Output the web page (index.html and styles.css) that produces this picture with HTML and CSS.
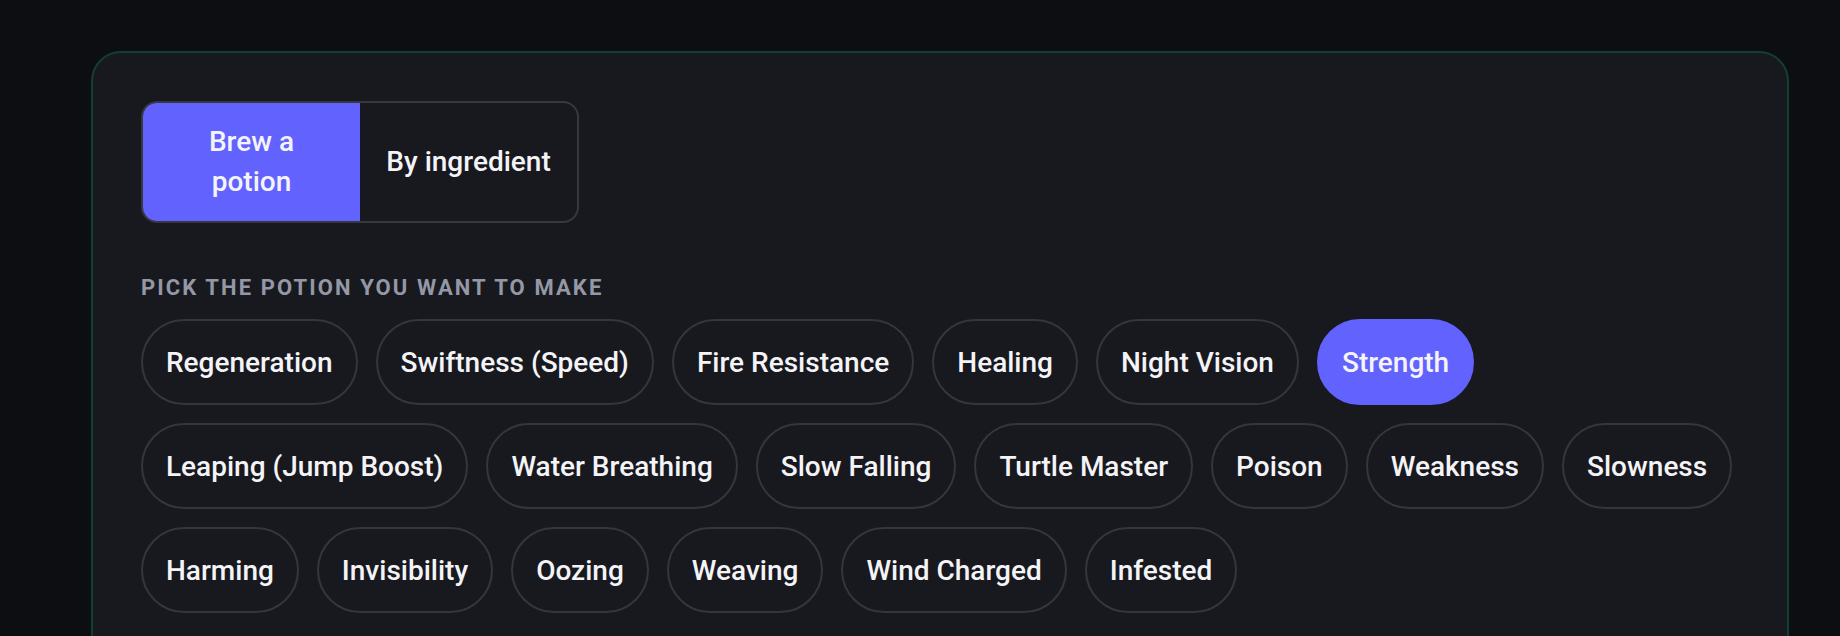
FILE: index.html
```html
<!DOCTYPE html>
<html lang="en">
<head>
<meta charset="utf-8">
<title>Potion brewing</title>
<link rel="stylesheet" href="styles.css">
</head>
<body>
<main class="page">
  <section class="card">
    <div class="toggle">
      <button class="seg seg-active">Brew a<br>potion</button>
      <button class="seg">By ingredient</button>
    </div>
    <h2 class="label">Pick the potion you want to make</h2>
    <div class="pills">
      <button class="pill">Regeneration</button>
      <button class="pill">Swiftness (Speed)</button>
      <button class="pill">Fire Resistance</button>
      <button class="pill">Healing</button>
      <button class="pill">Night Vision</button>
      <button class="pill pill-active">Strength</button>
      <button class="pill">Leaping (Jump Boost)</button>
      <button class="pill">Water Breathing</button>
      <button class="pill">Slow Falling</button>
      <button class="pill">Turtle Master</button>
      <button class="pill">Poison</button>
      <button class="pill">Weakness</button>
      <button class="pill">Slowness</button>
      <button class="pill">Harming</button>
      <button class="pill">Invisibility</button>
      <button class="pill">Oozing</button>
      <button class="pill">Weaving</button>
      <button class="pill">Wind Charged</button>
      <button class="pill">Infested</button>
    </div>
  </section>
</main>
</body>
</html>
```
FILE: styles.css
```css
* { box-sizing: border-box; }
html, body {
  margin: 0;
  height: 100%;
  background: #0d0e12;
  overflow: hidden;
}
body {
  font-family: Roboto, "Liberation Sans", sans-serif;
  color: #f4f4f7;
}
.page {
  padding: 51px 51px 0 91px;
}
.card {
  background: #18191f;
  border: 2px solid #113f31;
  border-radius: 30px;
  padding: 48px 48px 60px;
  min-height: 700px;
}
.toggle {
  display: grid;
  grid-template-columns: 1fr 1fr;
  width: 438px;
  height: 122px;
  border: 2px solid #37383d;
  border-radius: 16px;
  overflow: hidden;
}
.seg {
  appearance: none;
  border: 0;
  margin: 0;
  background: transparent;
  color: #f4f4f7;
  font-family: inherit;
  font-size: 28px;
  font-weight: 500;
  line-height: 40px;
  padding: 0 16px;
  text-align: center;
  display: flex;
  align-items: center;
  justify-content: center;
}
.seg-active {
  background: #6262ff;
}
.label {
  margin: 52px 0 19px;
  font-size: 22px;
  font-weight: 700;
  line-height: normal;
  letter-spacing: 0.095em;
  text-transform: uppercase;
  color: #9498a6;
}
.pills {
  display: flex;
  flex-wrap: wrap;
  gap: 18px;
}
.pill {
  appearance: none;
  margin: 0;
  height: 86px;
  padding: 0 23px;
  border: 2px solid #35363b;
  border-radius: 43px;
  background: transparent;
  color: #f4f4f7;
  font-family: inherit;
  font-size: 28px;
  font-weight: 500;
  display: inline-flex;
  align-items: center;
  white-space: nowrap;
}
.pill-active {
  background: #6262ff;
  border-color: #6262ff;
}
```
